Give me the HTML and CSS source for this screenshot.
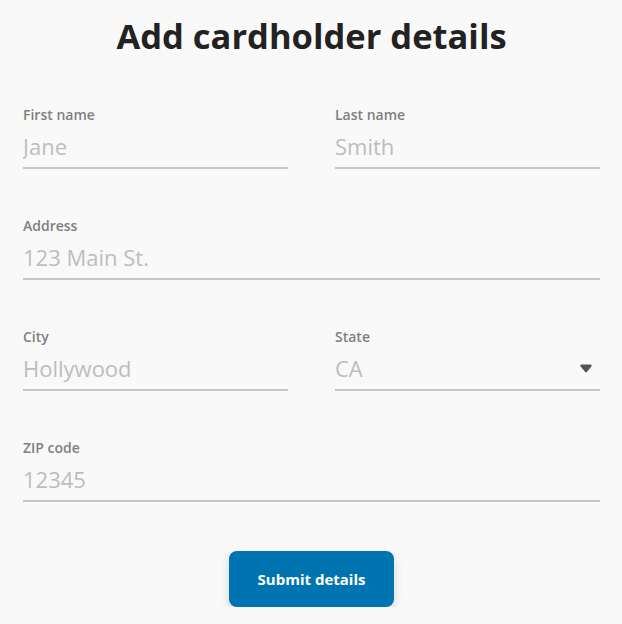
FILE: index.html
```html
<!DOCTYPE html>
<html lang="en">
<head>
    <meta charset="UTF-8">
    <title>Add cardholder details</title>
    <link rel="stylesheet" href="styles.css">
</head>
<body>
    <form class="card-form">
        <h1 class="title">Add cardholder details</h1>

        <div class="row two">
            <label class="field">
                <span class="field-label">First name</span>
                <input type="text" placeholder="Jane">
            </label>
            <label class="field">
                <span class="field-label">Last name</span>
                <input type="text" placeholder="Smith">
            </label>
        </div>

        <div class="row">
            <label class="field">
                <span class="field-label">Address</span>
                <input type="text" placeholder="123 Main St.">
            </label>
        </div>

        <div class="row two">
            <label class="field">
                <span class="field-label">City</span>
                <input type="text" placeholder="Hollywood">
            </label>
            <label class="field">
                <span class="field-label">State</span>
                <span class="select-wrap">
                    <select>
                        <option>CA</option>
                        <option>NY</option>
                        <option>TX</option>
                    </select>
                    <svg class="caret" width="12" height="9" viewBox="0 0 12 9">
                        <path d="M1.5 0.5 C0.3 0.5 0 1.6 0.6 2.4 L5.2 8 C5.6 8.5 6.4 8.5 6.8 8 L11.4 2.4 C12 1.6 11.7 0.5 10.5 0.5 Z" fill="#555"/>
                    </svg>
                </span>
            </label>
        </div>

        <div class="row">
            <label class="field">
                <span class="field-label">ZIP code</span>
                <input type="text" placeholder="12345">
            </label>
        </div>

        <div class="actions">
            <button type="button" class="submit">Submit details</button>
        </div>
    </form>
</body>
</html>
```

FILE: styles.css
```css
body {
    font-family: "Open Sans", "Noto Sans", sans-serif;
    background-color: #f9f9f9;
    margin: 0;
    padding: 0;
    color: #222;
}
.card-form {
    padding: 0 22px 0 23px;
}
.title {
    font-size: 34.5px;
    font-weight: 700;
    line-height: 40px;
    text-align: center;
    margin: 16px 0 51px;
    color: #222;
}
.row {
    display: grid;
    grid-template-columns: minmax(0, 1fr);
    column-gap: 47px;
    margin-bottom: 49px;
}
.row.two {
    grid-template-columns: minmax(0, 1fr) minmax(0, 1fr);
}
.field {
    display: flex;
    flex-direction: column;
    min-width: 0;
}
.field-label {
    font-size: 14px;
    font-weight: 600;
    line-height: 16px;
    color: #808080;
    margin-bottom: 6px;
}
.field input,
.field select {
    font-family: inherit;
    font-size: 22px;
    font-weight: 400;
    width: 100%;
    height: 40px;
    line-height: 34px;
    padding: 0 0 5px;
    border: none;
    border-bottom: 2px solid #c6c6c6;
    background: transparent;
    outline: none;
    color: #bdbdbd;
    box-sizing: border-box;
}
.field input::placeholder {
    color: #bdbdbd;
}
.select-wrap {
    position: relative;
    display: flex;
}
.select-wrap select {
    flex: 1;
    appearance: none;
    -webkit-appearance: none;
}
.caret {
    position: absolute;
    right: 8px;
    top: 13px;
    pointer-events: none;
}
.actions {
    text-align: center;
}
.submit {
    font-family: inherit;
    font-size: 15px;
    font-weight: 700;
    color: white;
    background: #0073b1;
    border: none;
    border-radius: 8px;
    width: 165px;
    height: 56px;
    cursor: pointer;
    box-shadow: 0 4px 10px rgba(0, 0, 0, 0.15);
}
```
